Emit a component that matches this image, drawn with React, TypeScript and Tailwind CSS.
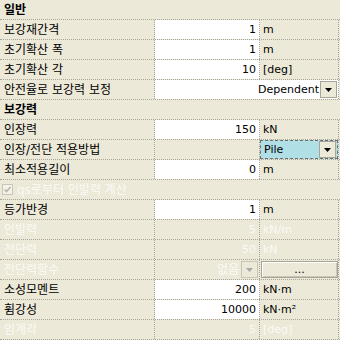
import React from "react";

const FONT = { fontFamily: '"DejaVu Sans", "Noto Sans CJK KR", sans-serif' };
const DOT = "border-[#a8a497] border-dotted";
const DIS = "text-[#fbfaf5]";

function Arrow({ disabled = false }: { disabled?: boolean }) {
  return (
    <span
      className={`flex items-center justify-center w-[17px] h-[17px] border ${
        disabled ? "border-[#c9c6b8] bg-[#ece9d8]" : "border-[#a8a497] bg-[#ece9d8]"
      }`}
    >
      <svg width="7" height="4" viewBox="0 0 7 4">
        <polygon points="0,0 7,0 3.5,4" fill={disabled ? "#a8a8a8" : "#000"} />
      </svg>
    </span>
  );
}

function Header({ label }: { label: string }) {
  return (
    <div className={`flex items-center h-[20px] border-b ${DOT} pl-[4px] font-bold text-[12px] text-black`}>
      {label}
    </div>
  );
}

interface RowProps {
  label: string;
  value?: string;
  unit?: string;
  disabled?: boolean;
}

function Row({ label, value = "", unit = "", disabled = false }: RowProps) {
  return (
    <div className={`flex h-[20px] border-b ${DOT}`}>
      <div
        className={`w-[155px] shrink-0 flex items-center pl-[4px] border-r ${DOT} text-[12px] ${
          disabled ? DIS : "text-black"
        }`}
      >
        {label}
      </div>
      <div
        className={`w-[105px] shrink-0 flex items-center justify-end pr-[3px] border-r ${DOT} text-[11px] ${
          disabled ? `${DIS}` : "bg-white text-black"
        }`}
      >
        {value}
      </div>
      <div
        className={`w-[79px] shrink-0 flex items-center pl-[3px] border-r ${DOT} text-[11px] ${
          disabled ? DIS : "text-black"
        }`}
      >
        {unit}
      </div>
    </div>
  );
}

export default function App() {
  return (
    <div className="w-[340px] h-[340px] overflow-hidden bg-[#ece9d8] leading-[16px]" style={FONT}>
      <Header label="일반" />
      <Row label="보강재간격" value="1" unit="m" />
      <Row label="초기확산 폭" value="1" unit="m" />
      <Row label="초기확산 각" value="10" unit="[deg]" />
      <div className={`flex h-[20px] border-b ${DOT}`}>
        <div className={`w-[155px] shrink-0 flex items-center pl-[4px] border-r ${DOT} text-[12px] text-black`}>
          안전율로 보강력 보정
        </div>
        <div className={`w-[184px] shrink-0 flex items-center justify-end gap-[1px] pr-[1px] bg-white border-r ${DOT} text-[11px] text-black`}>
          <span>Dependent</span>
          <Arrow />
        </div>
      </div>
      <Header label="보강력" />
      <Row label="인장력" value="150" unit="kN" />
      <div className={`flex h-[20px] border-b ${DOT}`}>
        <div className={`w-[155px] shrink-0 flex items-center pl-[4px] border-r ${DOT} text-[12px] text-black`}>
          인장/전단 적용방법
        </div>
        <div className={`w-[105px] shrink-0 border-r ${DOT}`} />
        <div className={`w-[79px] shrink-0 flex items-center border-r ${DOT}`}>
          <div className="flex items-center justify-between w-[78px] h-[19px] bg-[#b0e0e6] border border-dashed border-[#6e6e6e] pl-[3px] pr-[1px] text-[11px] text-black">
            <span>Pile</span>
            <Arrow />
          </div>
        </div>
      </div>
      <Row label="최소적용길이" value="0" unit="m" />
      <div className={`flex items-center gap-[4px] h-[20px] border-b ${DOT} pl-[2px] text-[12px] ${DIS}`}>
        <span className="flex items-center justify-center w-[11px] h-[11px] border border-[#c9c6b8] bg-[#f3f1e8]">
          <svg width="9" height="9" viewBox="0 0 9 9">
            <polyline points="1.5,4.5 3.5,6.5 7.5,2" fill="none" stroke="#b7b5aa" strokeWidth="1.6" />
          </svg>
        </span>
        <span>qs로부터 인발력 계산</span>
      </div>
      <Row label="등가반경" value="1" unit="m" />
      <Row label="인발력" value="5" unit="kN/m" disabled />
      <Row label="전단력" value="50" unit="kN" disabled />
      <div className={`flex h-[20px] border-b ${DOT}`}>
        <div className={`w-[155px] shrink-0 flex items-center pl-[4px] border-r ${DOT} text-[12px] ${DIS}`}>
          전단력함수
        </div>
        <div className={`w-[105px] shrink-0 flex items-center justify-end gap-[2px] pr-[1px] border-r ${DOT} text-[12px] ${DIS}`}>
          <span>없음</span>
          <Arrow disabled />
        </div>
        <div className={`w-[79px] shrink-0 flex items-center pl-[1px] border-r ${DOT}`}>
          <div className="flex items-center justify-center w-[77px] h-[17px] bg-[#ece9d8] border border-[#a8a497] shadow-[inset_1px_1px_0_#ffffff,inset_-1px_-1px_0_#c9c6b8] text-[11px] text-black">
            ...
          </div>
        </div>
      </div>
      <Row label="소성모멘트" value="200" unit="kN·m" />
      <Row label="휨강성" value="10000" unit="kN·m²" />
      <Row label="임계각" value="5" unit="[deg]" disabled />
    </div>
  );
}
